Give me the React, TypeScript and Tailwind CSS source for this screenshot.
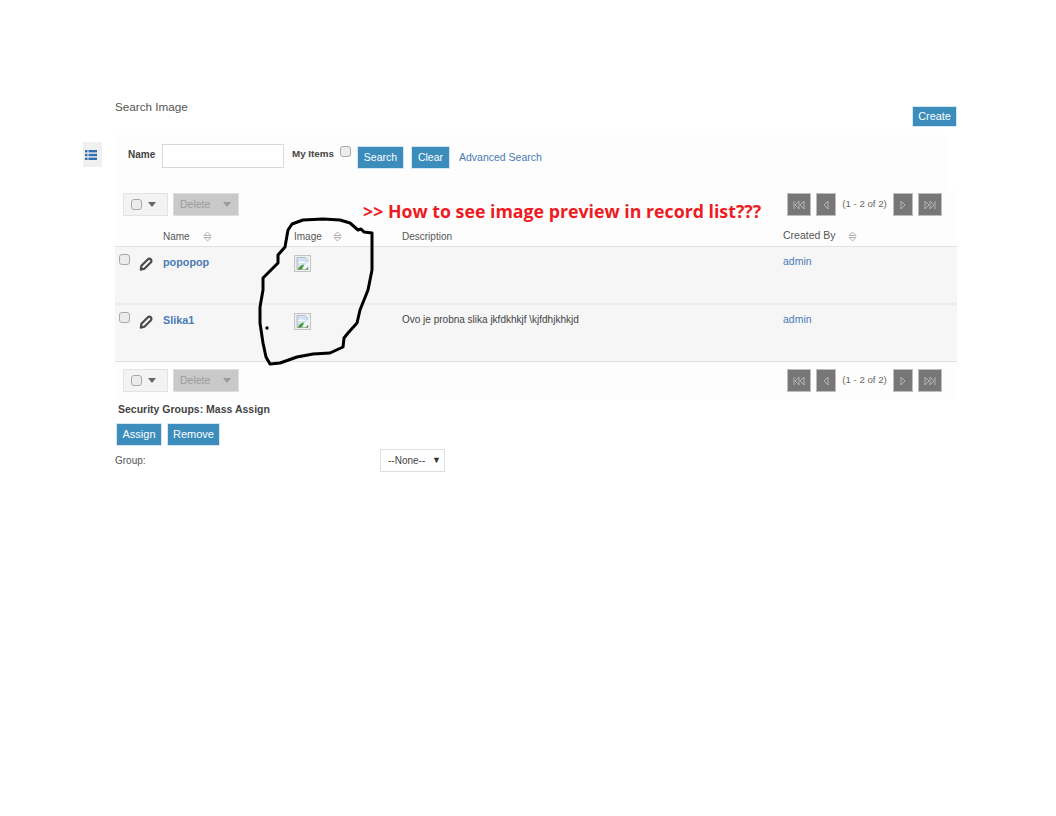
function SortIcon() {
  return (
    <svg width="9" height="11" viewBox="0 0 9 11" className="shrink-0">
      <path d="M1 4.5 L4.5 1 L8 4.5 Z" fill="none" stroke="#b0b0b0" strokeWidth="1" />
      <path d="M1 6.5 L4.5 10 L8 6.5 Z" fill="none" stroke="#b0b0b0" strokeWidth="1" />
    </svg>
  );
}

function Check({ className = "" }: { className?: string }) {
  return <span className={`block w-[11px] h-[11px] rounded-[3px] border border-[#a9a9a9] bg-[#ececec] ${className}`} />;
}

function Pencil() {
  return (
    <svg width="16" height="16" viewBox="0 0 16 16" className="shrink-0 mt-[2px] -ml-[1px]">
      <path
        d="M10.2 3 a2.2 2.2 0 0 1 3 3 L6.4 12.8 L2.8 13.6 L3.4 9.8 Z"
        fill="none"
        stroke="#4a4a4a"
        strokeWidth="2.2"
        strokeLinejoin="round"
      />
      <path d="M2.4 14 L3 10.4 L6 13.2 Z" fill="#4a4a4a" />
    </svg>
  );
}

function BrokenImage() {
  return (
    <svg width="17" height="17" viewBox="0 0 17 17" className="block mt-[1px]">
      <rect x="0.5" y="0.5" width="16" height="16" fill="#efefef" stroke="#c4c4c4" />
      <path d="M3 2.5 H11 L14 5.5 V14.5 H3 Z" fill="#cfe2f5" stroke="#9a9a9a" strokeWidth="0.6" />
      <path d="M4 8 Q6 5 8 6.8 Q10 6.2 11.5 8 Z" fill="#fff" />
      <path d="M3.5 14.5 Q6 10 10.5 9.5 L7.5 14.5 Z" fill="#4a9a2c" />
      <path d="M11 14.5 L14 11.5 V14.5 Z" fill="#4a9a2c" />
      <path d="M9.5 11 L16 4.5 V10.5 L12 14 H9.5 Z" fill="#fff" opacity="0.7" />
    </svg>
  );
}

function PageBtn({ kind }: { kind: "first" | "prev" | "next" | "last" }) {
  const wide = kind === "first" || kind === "last";
  return (
    <span className={`flex h-[23px] items-center justify-center bg-[#777777] border border-[#bdbdbd] ${wide ? "w-[24px]" : "w-[20px]"}`}>
      {kind === "first" && (
        <svg width="12" height="10" viewBox="0 0 12 10" fill="none" stroke="#b5b5b5">
          <path d="M1 1 V9 M6 1 L2 5 L6 9 Z M11 1 L7 5 L11 9 Z" />
        </svg>
      )}
      {kind === "prev" && (
        <svg width="6" height="10" viewBox="0 0 6 10" fill="none" stroke="#b5b5b5">
          <path d="M5 1 L1 5 L5 9 Z" />
        </svg>
      )}
      {kind === "next" && (
        <svg width="6" height="10" viewBox="0 0 6 10" fill="none" stroke="#b5b5b5">
          <path d="M1 1 L5 5 L1 9 Z" />
        </svg>
      )}
      {kind === "last" && (
        <svg width="12" height="10" viewBox="0 0 12 10" fill="none" stroke="#b5b5b5">
          <path d="M11 1 V9 M6 1 L10 5 L6 9 Z M1 1 L5 5 L1 9 Z" />
        </svg>
      )}
    </span>
  );
}

function Caret({ color }: { color: string }) {
  return <span className={`block w-0 h-0 border-x-[4px] border-x-transparent border-t-[5px] ${color}`} />;
}

function Toolbar() {
  return (
    <div className="flex items-center justify-between pl-[8px] pr-[15px] bg-[#fdfdfd]">
      <div className="flex items-center gap-[5px]">
        <span className="flex items-center gap-[6px] w-[45px] h-[23px] pl-[7px] bg-[#f3f3f3] border border-[#e3e3e3]">
          <Check className="w-[10px] h-[10px] rounded-[2px]" />
          <Caret color="border-t-[#666666]" />
        </span>
        <span className="flex items-center justify-between w-[66px] h-[23px] pl-[6px] pr-[7px] bg-[#c9c9c9] border border-[#dddddd] text-[10.5px] text-[#9a9a9a]">
          Delete
          <Caret color="border-t-[#9a9a9a]" />
        </span>
      </div>
      <div className="flex items-center">
        <PageBtn kind="first" />
        <span className="w-[5px]" />
        <PageBtn kind="prev" />
        <span className="w-[57px] text-center text-[9.7px] text-[#666666]">(1 - 2 of 2)</span>
        <PageBtn kind="next" />
        <span className="w-[5px]" />
        <PageBtn kind="last" />
      </div>
    </div>
  );
}

function Row({ name, desc, className = "" }: { name: string; desc?: string; className?: string }) {
  return (
    <div className={`grid grid-cols-[24px_24px_131px_108px_381px_1fr] bg-[#f6f6f6] pt-[7px] ${className}`}>
      <Check className="ml-[4px]" />
      <Pencil />
      <span className="text-[10.8px] font-bold text-[#4a7ab5]">{name}</span>
      <BrokenImage />
      <span className="text-[10px] text-[#444444]">{desc}</span>
      <span className="text-[10.5px] text-[#4a7ab5]">admin</span>
    </div>
  );
}

function Btn({ children, className = "" }: { children: string; className?: string }) {
  return (
    <span className={`flex items-center justify-center bg-[#3c8dbc] text-white border border-[#d4e6f1] ${className}`}>
      {children}
    </span>
  );
}

export default function App() {
  return (
    <div
      className="relative w-[1056px] h-[816px] bg-white overflow-hidden"
      style={{ fontFamily: '"Liberation Sans", Arial, sans-serif' }}
    >
      <div className="flex pt-[98px] pl-[83px]">
        {/* SIDE ICON */}
        <div className="w-[32px] shrink-0 pt-[44px]">
          <span className="flex w-[19px] h-[25px] items-center justify-center pr-[4px] bg-[#f0f0f0]">
            <svg width="12" height="10" viewBox="0 0 12 10" fill="#2f6fb0" className="shrink-0">
              <rect x="0" y="0" width="2.5" height="2.4" />
              <rect x="3.5" y="0" width="8.5" height="2.4" />
              <rect x="0" y="3.8" width="2.5" height="2.4" />
              <rect x="3.5" y="3.8" width="8.5" height="2.4" />
              <rect x="0" y="7.6" width="2.5" height="2.4" />
              <rect x="3.5" y="7.6" width="8.5" height="2.4" />
            </svg>
          </span>
        </div>

        {/* MAIN */}
        <div className="w-[842px]">
          <div className="flex justify-between h-[37px]">
            <span className="text-[11.7px] text-[#555555]">Search Image</span>
            <Btn className="w-[45px] h-[21px] mt-[8px] text-[10.8px]">Create</Btn>
          </div>

          {/* SEARCH */}
          <div className="flex items-start w-[832px] h-[55px] pl-[13px] pt-[9px] bg-[#fdfdfd]">
            <span className="text-[10px] font-bold text-[#444444] mt-[3px] w-[34px]">Name</span>
            <span className="block w-[122px] h-[24px] bg-white border border-[#d9d9d9]" />
            <span className="text-[9.8px] font-bold text-[#444444] mt-[3px] ml-[8px] w-[48px]">My Items</span>
            <Check className="mt-[2px]" />
            <Btn className="w-[47px] h-[23px] ml-[6px] mt-[2px] text-[10.5px]">Search</Btn>
            <Btn className="w-[39px] h-[23px] ml-[7px] mt-[2px] text-[10.5px]">Clear</Btn>
            <span className="text-[10.5px] text-[#4a7ab5] ml-[9px] mt-[6px]">Advanced Search</span>
          </div>

          {/* TABLE */}
          <div className="bg-[#fdfdfd] pt-[3px]">
            <Toolbar />
            <div className="grid grid-cols-[48px_131px_108px_381px_1fr] h-[31px] pt-[14px] border-b border-[#e2e2e2] text-[10px] text-[#555555]">
              <span />
              <span className="flex items-center gap-[13px] h-[12px]">Name <SortIcon /></span>
              <span className="flex items-center gap-[11px] h-[12px]">Image <SortIcon /></span>
              <span className="flex items-center h-[12px]">Description</span>
              <span className="flex items-center gap-[12px] h-[12px] text-[10.5px]">Created By <SortIcon /></span>
            </div>
            <Row name="popopop" className="h-[58px] border-b-2 border-[#ececec]" />
            <Row name="Slika1" desc="Ovo je probna slika jkfdkhkjf \kjfdhjkhkjd" className="h-[57px] border-b border-[#dfdfdf]" />
            <div className="pt-[7px] pb-[8px]">
              <Toolbar />
            </div>
          </div>

          {/* MASS ASSIGN */}
          <div className="text-[10.5px] font-bold text-[#444444] pl-[3px] pt-[2px]">Security Groups: Mass Assign</div>
          <div className="flex gap-[5px] mt-[5px] ml-[1px]">
            <Btn className="w-[46px] h-[23px] text-[11px]">Assign</Btn>
            <Btn className="w-[53px] h-[23px] text-[11px]">Remove</Btn>
          </div>
          <div className="flex items-start mt-[3px]">
            <span className="text-[10px] text-[#555555] w-[265px] pt-[4px]">Group:</span>
            <span className="flex items-center justify-between w-[65px] h-[23px] pl-[7px] pr-[3px] bg-white border border-[#dedede] text-[10px] text-[#444444]">
              --None--
              <span className="text-[9px] text-[#333333]">▼</span>
            </span>
          </div>
        </div>
      </div>

      {/* ANNOTATION */}
      <span
        className="absolute left-[363px] top-[198px] text-[17.75px] font-bold text-[#ed1c24] whitespace-nowrap"
        style={{ fontFamily: '"Open Sans", sans-serif' }}
      >
        {">> How to see image preview in record list???"}
      </span>
      <svg width="1056" height="816" className="absolute left-0 top-0 pointer-events-none" fill="none">
        <path
          d="M292 224 L303 220 L323 219 L340 220 L350 223 L358 230 L361 229 L364 232 L372 233 L372 270 L368 290 L360 310 L357 323 L348 333 L344 338 L343 347 L330 353 L313 354 L297 357 L280 363 L270 364 L266 357 L263 343 L260 323 L260 307 L263 290 L263 278 L278 263 L278 255 L285 247 L288 230 Z"
          stroke="#000"
          strokeWidth="3"
          strokeLinejoin="round"
        />
        <circle cx="267" cy="328" r="1.7" fill="#000" />
      </svg>
    </div>
  );
}
